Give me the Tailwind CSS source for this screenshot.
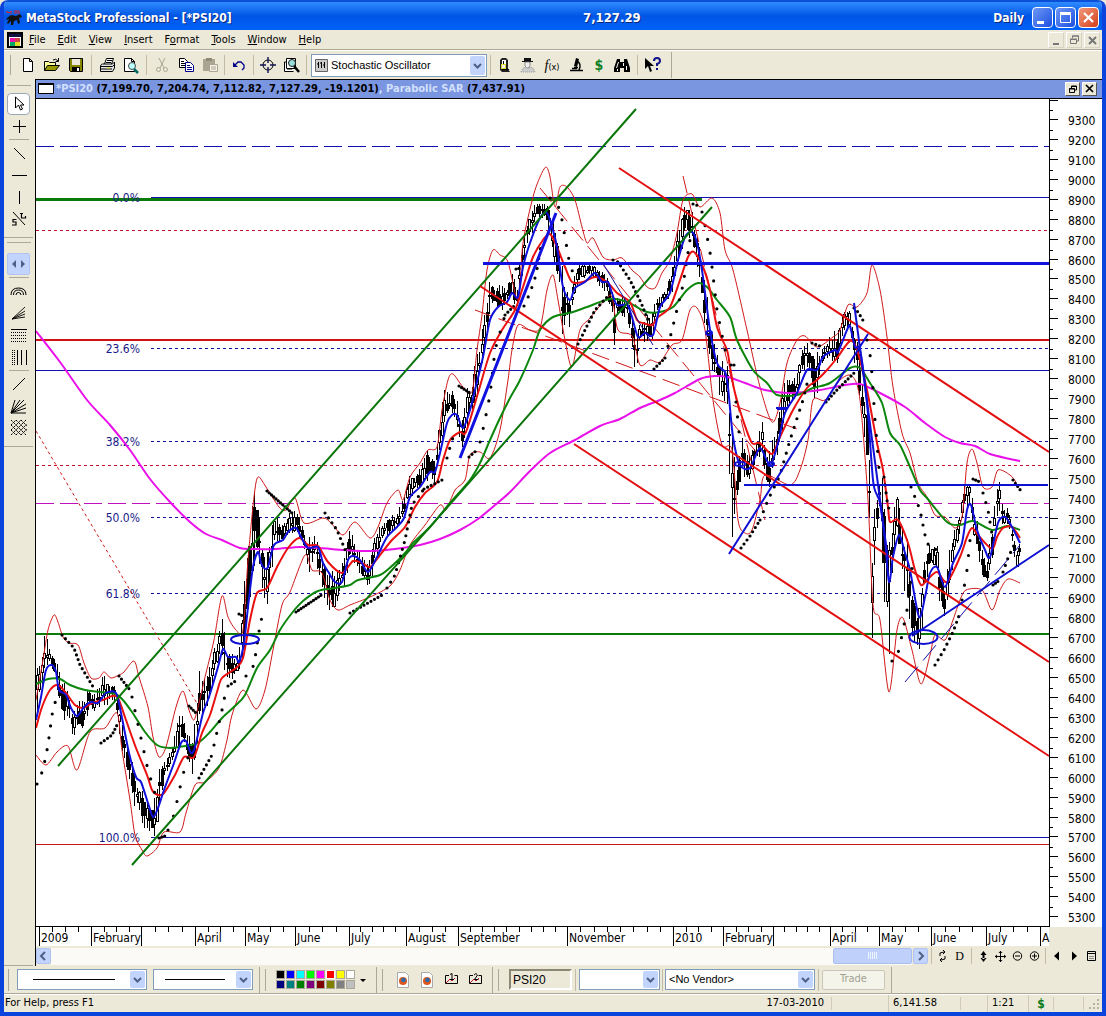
<!DOCTYPE html>
<html lang="en">
<head>
  <meta charset="UTF-8" />
  <meta name="viewport" content="width=device-width, initial-scale=1.0" />
  <title>MetaStock Professional - [*PSI20]</title>
  <script src="https://cdn.jsdelivr.net/npm/@tailwindcss/browser@4"></script>
</head>
<body class="h-screen flex flex-col overflow-hidden rounded-t-lg bg-[#ece9d8] text-[11px] text-black border-x-4 border-b-4 border-[#0a44dc] [font-family:'DejaVu_Sans_Condensed','DejaVu_Sans',sans-serif]">

  <!-- title bar -->
  <header class="-mx-1 h-[30px] shrink-0 flex items-center pl-[6px] pr-[7px] text-white font-bold text-[12px] bg-linear-to-b from-[#2f8bff] via-[#0055e5] to-[#0062fa] border-t-2 border-[#0a4fd6]">
    <svg class="size-4 mr-1 mt-1" viewBox="0 0 16 16"><path d="M1 3v-2l2 2 2-2v3M8 1h5M8 3h4M13 1v3" stroke="#e02020" fill="none"/><path d="M1 8l4-3 5 1 4-2 2 3-3 1 1 5-2 1-1-4-3 1-1 4-2 0 0-4-3 3-1-1 2-4-3 1z" fill="#111"/></svg>
    <h1 class="w-[557px] mt-1 [text-shadow:1px_1px_#0a2a80]">MetaStock Professional - [*PSI20]</h1>
    <span class="mt-1 text-[13px] [text-shadow:1px_1px_#0a2a80]">7,127.29</span>
    <span class="ml-auto mt-1 [text-shadow:1px_1px_#0a2a80]">Daily</span>
    <div class="ml-2 mt-[3px] flex gap-[2px]">
      <button aria-label="Minimize" class="size-[21px] rounded border border-white bg-linear-to-br from-[#6f97f5] to-[#1c4de0]"><svg viewBox="0 0 19 19"><path d="M4 13h7v3h-7z" fill="#fff"/></svg></button>
      <button aria-label="Maximize" class="size-[21px] rounded border border-white bg-linear-to-br from-[#6f97f5] to-[#1c4de0]"><svg viewBox="0 0 19 19"><path d="M4.500 5.500h10v9h-10zM4 4.500h11M4 6.500h11" fill="none" stroke="#fff"/></svg></button>
      <button aria-label="Close" class="size-[21px] rounded border border-white bg-linear-to-br from-[#f0987c] to-[#d23a12]"><svg viewBox="0 0 19 19"><path d="M5 5l9 9M14 5l-9 9" stroke="#fff" stroke-width="2.200"/></svg></button>
    </div>
  </header>

  <!-- menu -->
  <nav class="h-5 shrink-0 flex items-center pl-[3px] pr-[2px] pt-px border-b border-[#aca899]">
    <svg class="w-4 h-4" viewBox="0 0 16 16"><path d="M1 1h14v14h-14z" fill="#fff" stroke="#000" stroke-width="2"/><path d="M2 2h12v3h-12z" fill="#114"/><path d="M3 6h5v4h-5z" fill="#e1a"/><path d="M8 6h5v4h-5z" fill="#c44"/><path d="M3 10h5v4h-5z" fill="#0a6"/><path d="M8 10h5v4h-5z" fill="#dd2"/></svg>
    <button class="px-[6px]"><u>F</u>ile</button>
    <button class="px-[6px]"><u>E</u>dit</button>
    <button class="px-[6px]"><u>V</u>iew</button>
    <button class="px-[6px]"><u>I</u>nsert</button>
    <button class="px-[6px]">F<u>o</u>rmat</button>
    <button class="px-[6px]"><u>T</u>ools</button>
    <button class="px-[6px]"><u>W</u>indow</button>
    <button class="px-[6px]"><u>H</u>elp</button>
    <div class="ml-auto flex gap-[2px]">
      <button aria-label="Minimize chart" class="size-4 border border-white border-r-[#d8d4c4] border-b-[#d8d4c4]"><svg viewBox="0 0 14 14"><path d="M4 10h6v2h-6z" fill="#777"/></svg></button>
      <button aria-label="Restore chart" class="size-4 border border-white border-r-[#d8d4c4] border-b-[#d8d4c4]"><svg viewBox="0 0 14 14"><path d="M3.500 6.500h6v4h-6zM3 6h7M5.500 5v-2h6v5h-2M5 3h7" fill="none" stroke="#777"/></svg></button>
      <button aria-label="Close chart" class="size-4 border border-white border-r-[#d8d4c4] border-b-[#d8d4c4]"><svg viewBox="0 0 14 14"><path d="M4 4l7 7M11 4l-7 7" stroke="#777" stroke-width="2"/></svg></button>
    </div>
  </nav>

  <!-- main toolbar -->
  <div class="h-[29px] shrink-0 flex items-center border-t border-white">
    <i class="w-[3px] h-5 ml-1 mr-[5px] border-r border-[#aca899]"></i>
    <button aria-label="New" class="w-6 h-6 grid place-items-center"><svg width="16" height="16"><path d="M3.500 1.500h6l3 3v10h-9zM9.500 1.500v3h3" fill="#fff" stroke="#000"/></svg></button>
    <button aria-label="Open" class="w-6 h-6 grid place-items-center"><svg width="18" height="16"><path d="M1.500 13.500v-9h4l1 1h6v3" fill="#ff9" stroke="#000"/><path d="M1.500 13.500l3-5h12l-4 5z" fill="#990" stroke="#000"/><path d="M10 3q3-2 5 1M15.500 1v3.500h-3" fill="none" stroke="#000"/></svg></button>
    <button aria-label="Save" class="w-6 h-6 grid place-items-center"><svg width="16" height="16"><path d="M1.500 1.500h13v13h-12l-1-1z" fill="#880" stroke="#000"/><path d="M4 2h8v6h-8z" fill="#ece9d8"/><path d="M4 10h8v5h-8z" fill="#000"/><path d="M9 11h2v3h-2z" fill="#fff"/></svg></button>
    <i class="w-px h-5 mx-[3px] bg-[#c0bca8]"></i>
    <button aria-label="Print" class="w-6 h-6 grid place-items-center"><svg width="17" height="16"><path d="M5.500 7l2-5.500h7l-2 5.500" fill="#fff" stroke="#000"/><path d="M8 3.500h5M7 5.500h5" stroke="#000"/><path d="M1.500 8.500l2-1.500h10l2-2v6l-2 3.500h-12z" fill="#e6e6e6" stroke="#000"/><path d="M1.500 9.500h12l2-2M2 12h11" fill="none" stroke="#000"/><path d="M8 11h3" stroke="#dd0" stroke-width="1"/></svg></button>
    <button aria-label="Print preview" class="w-6 h-6 grid place-items-center"><svg width="18" height="17"><path d="M2.500 1.500h7l3 3v10h-10zM9.500 1.500v3h3" fill="#fff" stroke="#000"/><circle cx="10" cy="9" r="3.500" fill="#bff" stroke="#444"/><path d="M12 12l4 4" stroke="#066" stroke-width="2.500"/></svg></button>
    <i class="w-px h-5 mx-[3px] bg-[#c0bca8]"></i>
    <button aria-label="Cut" disabled class="w-6 h-6 grid place-items-center"><svg width="16" height="16" fill="none" stroke="#a9a592"><path d="M5 1l5 10M11 1l-5 10"/><circle cx="4.500" cy="12.500" r="2"/><circle cx="11.500" cy="12.500" r="2"/></svg></button>
    <button aria-label="Copy" class="w-6 h-6 grid place-items-center"><svg width="17" height="16" fill="#fff"><path d="M1.500 1.500h5l3 3v6h-8z" stroke="#000"/><path d="M3 4.500h3M3 6.500h5M3 8.500h5" stroke="#000"/><path d="M7.500 5.500h5l3 3v6h-8z" stroke="#008"/><path d="M9 8.500h3M9 10.500h5M9 12.500h5" stroke="#008"/></svg></button>
    <button aria-label="Paste" disabled class="w-6 h-6 grid place-items-center"><svg width="17" height="16"><path d="M1 2h12v12h-12z" fill="#a9a592"/><path d="M4 1h6v3h-6z" fill="#8f8b78"/><path d="M7.500 7.500h8v7h-8z" fill="#f4f2e8" stroke="#a9a592"/><path d="M9 10h5M9 12h5" stroke="#a9a592"/></svg></button>
    <i class="w-px h-5 mx-[2px] bg-[#c0bca8]"></i>
    <button aria-label="Undo" class="w-6 h-6 grid place-items-center"><svg width="14" height="14"><path d="M1 4v5h5z" fill="#008"/><path d="M3 7l3-3h3l3 3v3l-2 2" fill="none" stroke="#008" stroke-width="1.300"/></svg></button>
    <i class="w-px h-5 mx-[2px] bg-[#c0bca8]"></i>
    <button aria-label="Crosshair" class="w-6 h-6 grid place-items-center"><svg width="16" height="16" fill="none" stroke="#000"><circle cx="8" cy="8" r="5"/><path d="M8 0v6M8 10v6M0 8h6M10 8h6" stroke="#115" stroke-width="1.400"/></svg></button>
    <button aria-label="Zoom" class="w-6 h-6 grid place-items-center"><svg width="18" height="17"><path d="M1.500 5v9.500h9M1.500 5h2M4 12h5" fill="#fff" stroke="#000"/><path d="M3.500 1.500h9v10h-9z" fill="#fff" stroke="#000"/><circle cx="9" cy="6" r="3.500" fill="#9dd" stroke="#222"/><path d="M11 9l5 6" stroke="#000" stroke-width="2.500"/></svg></button>
    <i class="w-px h-5 mx-[2px] bg-[#c0bca8]"></i>
    <div class="relative w-[176px] ml-[2px]">
      <svg class="absolute left-1 top-[5px] size-[13px]" viewBox="0 0 13 13"><path d="M.500.500h12v12h-12z" fill="#ccc" stroke="#666"/><path d="M3.500 3v6M6.500 3v6M9.500 3v6M2 5h2M5 4h2M8 6h2" stroke="#000"/></svg>
      <select aria-label="Indicator" class="block w-full h-[23px] pl-[19px] appearance-none bg-white border border-[#7f9db9] text-[11px] [font-family:'Liberation_Sans',sans-serif]"><option>Stochastic Oscillator</option></select>
      <svg class="absolute right-[2px] top-[2px] w-[15px] h-[19px] rounded-xs bg-[#c2d3fc] pointer-events-none" viewBox="0 0 15 19"><path d="M4 8l3.500 3.500 3.500-3.500" fill="none" stroke="#4d6185" stroke-width="2"/></svg>
    </div>
    <i class="w-px h-5 ml-[3px] mr-px bg-[#c0bca8]"></i>
    <button aria-label="Expert" class="w-6 h-6 grid place-items-center"><svg width="14" height="16"><path d="M3 3l2-2h4l2 2v9l2 3h-8l-2-2z" fill="#222"/><path d="M5 3h4v4h-4z" fill="#fff"/><path d="M4 7h5v5h-5z" fill="#dd3"/><path d="M5 8h3v3h-3z" fill="#eee"/><path d="M6.500 4v3M5 12.500h7" stroke="#000"/></svg></button>
    <button aria-label="Explorer" class="w-6 h-6 grid place-items-center"><svg width="16" height="16"><path d="M4 1h7v3h2v1h-11v-1h2z" fill="#111"/><path d="M5 5h5v4l-2 2h-1l-2-2z" fill="#eee" stroke="#666" stroke-width=".7"/><path d="M1 15l2-4 3-1 2 2 2-2 3 1 2 4z" fill="#ccc" stroke="#999" stroke-dasharray="1 1"/></svg></button>
    <button aria-label="Indicator builder" class="w-6 h-6 grid place-items-center whitespace-nowrap"><span><em class="text-[14px] [font-family:'Liberation_Serif',serif]">f</em><span class="text-[9px]">(x)</span></span></button>
    <button aria-label="System tester" class="w-6 h-6 grid place-items-center"><svg width="16" height="16"><path d="M8 1l3 1-2 8-3-1z" fill="#000"/><path d="M6 10.500h4M9 4q5 3 2 9M2 13.500h13M4 11.500h5" stroke="#000" fill="none" stroke-width="1.500"/></svg></button>
    <button aria-label="OptionScope" class="w-[22px] h-6 text-[14px] font-bold text-[#0a8020]">$</button>
    <button aria-label="Find" class="w-6 h-6 grid place-items-center"><svg width="16" height="15"><path d="M3 1h3v3h4v-3h3l3 9v4h-6v-4h-4v4h-6v-4z" fill="#000"/><path d="M4.500 4l-2 6M9.500 5v3M12.500 8v4M3.500 11v2" stroke="#fff"/></svg></button>
    <i class="w-px h-5 mx-[3px] bg-[#c0bca8]"></i>
    <button aria-label="Context help" class="w-6 h-6 grid place-items-center"><svg width="18" height="16"><path d="M1 1v11l3-3 2 6 2-1-2-5h4z" fill="#000"/><path d="M10 4q0-3 3-3t3 3q0 2-3 3v2M13 11v2" fill="none" stroke="#118" stroke-width="2"/></svg></button>
    <i class="w-px h-[26px] ml-[6px] bg-[#aca899]"></i>
  </div>

  <div class="flex-1 min-h-0 flex">
    <!-- drawing tools -->
    <aside class="w-[31px] shrink-0 flex flex-col items-center pr-[2px]">
      <i class="w-6 h-[3px] my-[4px] border-b border-[#aca899] shrink-0"></i>
      <button aria-label="Pointer" class="w-[23px] h-[22px] mt-[3px] grid place-items-center rounded border border-[#9aa8b8] bg-white"><svg width="12" height="16"><path d="M2.500 1v11l3-3 2 5 2-1-2-4h3.500z" fill="#fff" stroke="#000"/></svg></button>
      <button aria-label="Crosshair" class="h-[22px]"><svg width="16" height="16"><path d="M8.500 2v13M2 8.500h13" stroke="#000"/></svg></button>
      <i class="w-5 h-px my-[2px] bg-[#aca899] shrink-0"></i>
      <button aria-label="Trendline" class="h-[22px]"><svg width="16" height="16"><path d="M3 3l11 11" stroke="#000"/></svg></button>
      <button aria-label="Horizontal line" class="h-[22px]"><svg width="16" height="16"><path d="M1 8.500h15" stroke="#000"/></svg></button>
      <button aria-label="Vertical line" class="h-[22px]"><svg width="16" height="16"><path d="M8.500 2v13" stroke="#000"/></svg></button>
      <button aria-label="Support and resistance" class="h-[22px]"><svg width="16" height="16" fill="none" stroke="#000"><path d="M2 1l12 13"/><path d="M5.500 8.500h-3.500v2.500h3v3h-4M10.500 2v5h4v-2M9 2.500h3" stroke-width="1.200"/></svg></button>
      <i class="w-full h-px mt-[7px] bg-[#aca899] shrink-0"></i>
      <i class="w-6 h-[3px] my-[2px] border-b border-[#aca899] shrink-0"></i>
      <button aria-label="Scroll" class="w-[23px] h-[22px] mt-[8px] grid place-items-center rounded-xs bg-[#c2d3fc] border border-[#b0c4f4]"><svg width="17" height="12"><path d="M6 2l-4 4 4 4zM11 2l4 4-4 4z" fill="#4d6185"/></svg></button>
      <i class="w-5 h-px my-[2px] bg-[#aca899] shrink-0"></i>
      <button aria-label="Fibonacci arcs" class="h-[22px]"><svg width="17" height="16" fill="none" stroke="#000"><path d="M1 12q0-7 7.500-7t7.500 7M3.500 12q0-5 5-5t5 5M6 12q0-2.500 2.500-2.500t2.500 2.500"/></svg></button>
      <button aria-label="Fibonacci fan" class="h-[22px]"><svg width="16" height="16" fill="none" stroke="#000"><path d="M1 14l13-12M1 14l13-8M1 14l13-5M1 14l13-2" stroke-width=".9"/></svg></button>
      <button aria-label="Fibonacci retracement" class="h-[22px]"><svg width="16" height="16" stroke="#000"><path d="M0 2.500h16"/><path d="M0 5.500h16M0 8.500h16M0 11.500h16M0 14.500h16" stroke-dasharray="1 1"/></svg></button>
      <button aria-label="Fibonacci time zones" class="h-[22px]"><svg width="16" height="16" stroke="#000"><path d="M1.500 1v15M3.500 1v15" stroke-dasharray="1 1"/><path d="M6.500 1v15M10.500 1v15M15.500 1v15"/></svg></button>
      <i class="w-5 h-px my-[2px] bg-[#aca899] shrink-0"></i>
      <button aria-label="Gann line" class="h-[22px]"><svg width="16" height="16"><path d="M2 14l12-12" stroke="#000"/></svg></button>
      <button aria-label="Gann fan" class="h-[22px]"><svg width="17" height="17" fill="none" stroke="#000"><path d="M1 15l13-13M1 15l9-13M1 15l4-13M1 15l15-9M1 15l15-5M1 15h15"/></svg></button>
      <button aria-label="Gann grid" class="h-[22px]"><svg width="16" height="16" fill="none" stroke="#000" stroke-dasharray="1.500 .7"><path d="M0 5l5-5M0 10l10-10M0 15l15-15M5 15l11-11M10 15l6-6M0 0l15 15M5 0l11 11M10 0l6 6M0 5l10 10M0 10l5 5"/></svg></button>
      <i class="w-full h-px mt-[7px] bg-[#aca899] shrink-0"></i>
      <i class="w-full h-px mt-auto bg-[#aca899] shrink-0"></i>
    </aside>

    <!-- chart window -->
    <main class="flex-1 min-w-0 flex flex-col border-l border-black">
      <div class="h-5 shrink-0 flex items-center pl-[2px] pr-[5px] bg-[#7b96e0] border-y border-black font-bold text-[11px]">
        <svg width="16" height="12" class="mr-[2px]"><path d="M.500.500h15v10h-15z" fill="#fff" stroke="#000"/><path d="M0 1h16" stroke="#000" stroke-width="2"/></svg>
        <p class="whitespace-pre"><span class="text-[#d3e0fb]">*PSI20 </span>(7,199.70, 7,204.74, 7,112.82, 7,127.29, -19.1201)<span class="text-[#d3e0fb]">, Parabolic SAR </span>(7,437.91)</p>
        <button aria-label="Restore" class="ml-auto w-[15px] h-[14px] bg-[#ece9d8] border border-white border-r-[#555] border-b-[#555]"><svg viewBox="0 0 13 12"><path d="M3.500 5.500h5v4h-5zM3 6h6M5.500 5v-2h5v4h-2M5 3.500h6" fill="none" stroke="#000"/></svg></button>
        <button aria-label="Close" class="ml-[2px] w-[15px] h-[14px] bg-[#ece9d8] border border-white border-r-[#555] border-b-[#555]"><svg viewBox="0 0 13 12"><path d="M3 2l7 7M10 2l-7 7" stroke="#000" stroke-width="1.700"/></svg></button>
      </div>

      <svg id="chart" class="flex-1 min-h-0 w-full block" viewBox="36 99 1066 847" preserveAspectRatio="none" role="img" aria-label="PSI20 daily chart" fill="none" stroke-linejoin="round">
        <path d="M36 99h1066v828h-53v19h-1013z" fill="#fff"/>
        <!-- horizontal levels -->
        <g shape-rendering="crispEdges">
          <path d="M36 146.500h1013" stroke="#1010b0" stroke-dasharray="18 6"/>
          <path d="M36 230.500h1013M36 465.500h1013" stroke="#c8102a" stroke-dasharray="3 3"/>
          <path d="M36 503.500h1013" stroke="#c010c0" stroke-dasharray="18 6"/>
          <path d="M151 348.500h898M151 441.500h898M151 517.500h898M151 593.500h898" stroke="#1010a0" stroke-dasharray="3 3"/>
          <path d="M151 197.500h898M36 370.500h1013M151 837.500h898" stroke="#1010b0"/>
          <path d="M36 844.500h1013" stroke="#c81414"/>
          <path d="M36 340h1013" stroke="#d41414" stroke-width="2"/>
          <path d="M36 634h1013" stroke="#0a7a0a" stroke-width="2"/>
          <path d="M36 199.500h666" stroke="#0a7a0a" stroke-width="3"/>
        </g>
        <g fill="#1a1a88" font-size="12" text-anchor="end">
          <text x="140" y="202">0.0%</text><text x="140" y="353">23.6%</text><text x="140" y="446">38.2%</text>
          <text x="140" y="522">50.0%</text><text x="140" y="598">61.8%</text><text x="140" y="842">100.0%</text>
        </g>

        <path id="wicks" stroke="#000" shape-rendering="crispEdges"/>
        <path id="hollow" stroke="#000" fill="#fff" shape-rendering="crispEdges"/>
        <path id="solid" fill="#000" shape-rendering="crispEdges"/>

        <!-- bands -->
        <g stroke="#d01818" stroke-width="1">
          <path data-curve="36,700 43,660 48,630 54,615 58,622 63,637 69,643 78,645 84,663 91,678 99,678 104,672 111,678 119,675 124,672 134,661 139,677 148,707 153,737 159,757 166,747 176,707 183,691 189,710 194,720 199,703 206,673 214,640 222,596 228,617 236,630 243,630 248,560 254,497 258,477 266,487 279,507 286,510 295,498 304,523 323,518 331,523 343,535 355,522 370,538 378,527 387,503 398,490 403,500 410,477 420,463 428,450 437,447 442,410 448,380 453,374 463,387 472,392 477,350 482,315 487,270 493,250 500,255 508,262 518,300 523,243 533,197 540,177 546,167 550,177 555,207 560,187 567,187 575,200 582,227 587,243 593,238 603,257 613,260 622,258 632,270 640,277 647,287 655,288 662,273 670,260 677,233 683,200 692,194 700,207 712,198 720,213 725,250 733,270 747,330 760,387 772,422 780,403 787,363 797,340 805,336 817,347 833,337 840,330 848,305 857,307 867,293 872,265 880,290 887,337 893,387 902,433 910,453 918,483 927,497 935,515 945,517 955,528 962,517 967,463 972,449 977,463 983,487 992,487 998,470 1010,475 1016,482"/>
          <path data-curve="36,755 46,765 57,752 68,746 77,770 90,732 105,728 117,713 122,750 130,800 135,835 142,850 147,856 157,848 164,832 180,832 186,813 195,785 205,782 219,768 227,740 232,715 243,690 256,709 265,690 273,650 282,605 290,592 305,555 312,570 322,573 330,600 338,610 350,605 370,597 390,586 400,570 410,545 425,525 440,505 446,510 455,490 465,480 470,455 480,452 490,458 500,430 508,380 512,350 518,325 530,330 540,328 547,290 553,275 558,300 565,340 572,367 580,330 590,318 605,300 612,297 618,330 632,336 640,365 650,360 660,362 672,345 682,340 690,310 697,308 705,330 713,400 722,445 732,450 738,520 745,533 752,530 760,500 765,475 790,485 800,470 808,440 813,400 825,400 840,380 852,376 860,400 868,500 873,605 880,620 889,692 897,630 903,618 912,650 921,684 930,655 935,635 945,640 953,620 960,600 966,590 982,590 992,610 1000,590 1008,579 1020,583"/>
          <path d="M36 431L198 705" stroke-dasharray="3 3"/>
          <path d="M475 310L797 429M540 188L762 459M683 176L765 520" stroke-dasharray="18 7"/>
        </g>

        <!-- moving averages -->
        <g stroke-width="2">
          <path stroke="#ea10ea" data-curve="36,331 60,362 87,400 110,425 130,450 150,479 170,502 190,522 206,534 222,540 240,548 255,549 275,549 300,547 320,548 345,550 370,551 395,549 420,545 440,539 460,530 478,519 495,505 510,492 530,471 550,453 575,440 600,426 620,419 640,408 660,400 675,393 700,379 715,376 728,377 745,383 765,390 790,393 820,390 845,385 860,384 880,393 905,407 925,423 945,437 960,443 975,446 990,454 1010,459 1020,461"/>
          <path stroke="#0c860c" data-curve="36,684 48,679 60,679 70,685 85,690 100,692 115,694 122,699 132,712 145,732 157,745 170,748 185,746 198,743 210,732 222,718 235,706 245,695 257,668 270,650 280,630 292,613 303,601 318,591 335,588 350,585 358,580 380,575 393,565 405,553 413,543 430,527 450,503 470,480 480,463 490,440 500,418 510,398 520,380 533,350 540,330 553,317 573,312 587,307 610,299 627,302 647,312 660,312 673,307 687,290 698,283 707,287 717,300 730,317 737,340 753,370 767,383 777,395 797,395 813,388 830,383 850,368 860,368 870,383 882,403 890,433 900,445 910,467 920,490 927,498 947,522 960,525 973,521 992,530 1007,526 1020,530"/>
          <path stroke="#ea1010" data-curve="36,728 42,707 50,690 58,685 66,693 75,705 83,708 92,703 103,700 112,696 118,698 126,720 136,748 147,775 152,790 158,795 164,793 175,775 184,757 194,757 202,733 210,715 217,692 222,678 236,668 243,658 250,620 257,593 267,588 277,567 288,548 299,538 308,545 318,546 328,562 342,573 353,561 362,563 370,567 380,555 392,540 405,527 415,507 425,493 437,482 443,460 450,440 460,432 466,432 478,393 490,353 502,330 515,310 523,287 533,257 543,240 550,234 557,247 565,267 572,282 583,282 595,277 607,282 617,293 630,302 637,320 643,323 652,325 658,317 670,307 680,280 688,257 694,252 703,267 710,290 717,327 727,350 730,367 735,393 743,420 752,443 760,443 772,454 780,437 793,410 807,388 817,380 827,370 837,358 850,341 857,350 867,390 877,443 883,470 888,507 890,522 898,520 908,543 915,570 921,585 927,580 937,572 947,582 960,557 967,537 972,528 978,535 992,549 997,537 1003,528 1012,527 1020,538"/>
          <path stroke="#1010dc" data-curve="36,720 41,697 46,670 52,665 56,672 59,690 66,695 71,708 77,716 84,707 91,702 98,703 106,693 116,693 121,713 129,753 136,777 141,782 148,803 153,817 158,808 164,790 174,763 181,743 186,741 191,753 195,747 203,713 209,697 218,667 223,649 228,657 236,657 239,662 244,643 248,607 253,567 258,552 261,563 264,568 268,567 274,545 283,540 288,532 296,528 301,537 308,548 318,547 323,563 329,573 335,582 342,582 348,560 353,556 360,560 368,572 377,557 387,537 397,527 404,518 410,497 420,487 430,472 435,472 440,453 447,423 452,415 457,415 463,428 470,410 475,390 483,357 490,320 498,307 507,302 512,293 518,297 523,267 530,243 540,218 547,213 552,227 557,247 563,287 570,300 575,288 585,282 595,273 602,282 608,282 612,293 617,305 627,305 632,317 638,337 645,333 653,335 660,307 670,293 678,260 685,237 692,232 697,243 702,270 710,330 717,363 725,372 728,387 733,437 740,465 750,468 760,448 770,465 778,443 785,413 797,393 807,370 817,370 823,357 835,350 838,352 847,330 850,326 855,347 860,350 867,403 873,480 877,495 880,503 885,540 889,582 893,557 899,535 905,553 910,570 919,617 925,597 930,573 937,567 945,587 953,563 962,543 967,510 971,505 977,530 985,550 990,557 998,523 1005,517 1012,527 1020,543"/>
        </g>

        <!-- parabolic SAR -->
        <g id="sar" stroke="#000" stroke-width="3.200" stroke-linecap="round"></g>

        <!-- trendlines and marks -->
        <path d="M58 766L636 109M132 865L712 207" stroke="#0a760a" stroke-width="2"/>
        <path d="M619 168L1049 452M480 286L1049 662M574 444L1049 756" stroke="#e41010" stroke-width="2"/>
        <path d="M483 263.500H1049M460 458L556 213" stroke="#1010e0" stroke-width="3"/>
        <path d="M744 485H1048M729 554L868 334M912 636L1049 545M854 303L888 560M777 409h10M776 408h12" stroke="#1010d4" stroke-width="2"/>
        <path d="M602 262L653 345" stroke="#1010a0"/>
        <path d="M905 682L1020 545" stroke="#1010a0" stroke-dasharray="20 8"/>
        <g stroke="#1010d4" stroke-width="2">
          <ellipse cx="245" cy="639.500" rx="14" ry="4.500"/>
          <ellipse cx="923.500" cy="637" rx="14" ry="7"/>
          <ellipse cx="709" cy="333" rx="3" ry="2"/>
          <ellipse cx="740" cy="464" rx="5" ry="2"/>
          <ellipse cx="771" cy="464" rx="3" ry="2"/>
        </g>
        <path id="axes" stroke="#000" shape-rendering="crispEdges"/>
        <g id="labels" fill="#000" font-size="12"></g>
      </svg>

      <!-- scroll row -->
      <div class="h-5 shrink-0 flex items-center">
        <button aria-label="Scroll left" class="w-[15px] h-4 rounded-xs bg-[#c2d3fc] border border-[#b0c4f4]"><svg viewBox="0 0 13 14"><path d="M8 3l-4 4 4 4" fill="none" stroke="#4d6185" stroke-width="2"/></svg></button>
        <div class="flex-1 h-[17px] bg-[#fbfaf6] flex justify-end">
          <div class="w-[79px] h-4 rounded-xs bg-[#bfd0fb] border border-[#a9bff2] grid place-items-center"><svg width="9" height="7"><path d="M.500 0v7M2.500 0v7M4.500 0v7M6.500 0v7M8.500 0v7" stroke="#eef4fe"/></svg></div>
        </div>
        <button aria-label="Scroll right" class="w-[15px] h-4 ml-px rounded-xs bg-[#c2d3fc] border border-[#b0c4f4]"><svg viewBox="0 0 13 14"><path d="M5 3l4 4-4 4" fill="none" stroke="#4d6185" stroke-width="2"/></svg></button>
        <i class="w-px h-4 ml-[3px] mr-[2px] bg-[#c0bca8]"></i>
        <button aria-label="Refresh" class="w-[17px]"><svg width="17" height="16" fill="none" stroke="#000"><path d="M6 8V5l4-1M9 2l2 2-2 2M11 8v3l-4 1M8 10l-2 2 2 2"/></svg></button>
        <button aria-label="Daily" class="w-[17px] text-[12px] [font-family:'Liberation_Serif',serif]">D</button>
        <i class="w-px h-4 mx-[3px] bg-[#c0bca8]"></i>
        <button aria-label="Rescale vertical" class="w-[17px]"><svg width="17" height="16"><path d="M8.500 3l3 4h-6zM8.500 14l3-4h-6zM7.500 6h2v5h-2z"/></svg></button>
        <button aria-label="Move" class="w-[17px]"><svg width="17" height="16"><path d="M8.500 3v11M3 8.500h11" stroke="#000"/><path d="M8.500 3l2 2h-4zM8.500 14l2-2h-4zM3 8.500l2-2v4zM14 8.500l-2-2v4z" fill="#000"/></svg></button>
        <button aria-label="Zoom out" class="w-[17px]"><svg width="17" height="16" fill="none" stroke="#000"><circle cx="8.500" cy="8" r="4.200"/><path d="M6 8h5"/></svg></button>
        <button aria-label="Zoom in" class="w-[17px]"><svg width="17" height="16" fill="none" stroke="#000"><circle cx="8.500" cy="8" r="4.200"/><path d="M6 8h5M8.500 5.500v5"/></svg></button>
        <i class="w-px h-4 mx-[2px] bg-[#c0bca8]"></i>
        <button aria-label="Previous" class="w-[18px]"><svg width="17" height="16"><path d="M11 3.500v9l-5-4.500z"/></svg></button>
        <button aria-label="Next" class="w-[17px]"><svg width="17" height="16"><path d="M6 3.500v9l5-4.500z"/></svg></button>
        <button aria-label="Layout" class="w-[17px] mr-[2px]"><svg width="17" height="16" fill="none" stroke="#000"><path d="M4.500 3.500h8v9h-8zM4 5.500h9"/><path d="M6 8.500h5M6 10.500h5" stroke="#888"/></svg></button>
      </div>
    </main>
  </div>

  <!-- line style toolbar -->
  <div class="h-7 shrink-0 flex items-center border-b border-[#aca899]">
    <i class="w-[5px] h-[22px] mr-2 border-r border-[#aca899]"></i>
    <div class="relative w-[130px] mr-[6px]">
      <select aria-label="Line style" class="block w-full h-[21px] appearance-none bg-white border border-[#7f9db9]"><option></option></select>
      <i class="absolute left-4 right-8 top-[10px] h-px bg-black pointer-events-none"></i>
      <svg class="absolute right-[2px] top-[2px] w-[15px] h-[17px] rounded-xs bg-[#c2d3fc] pointer-events-none" viewBox="0 0 15 17"><path d="M4 7l3.500 3.500 3.500-3.500" fill="none" stroke="#4d6185" stroke-width="2"/></svg>
    </div>
    <div class="relative w-[100px]">
      <select aria-label="Line weight" class="block w-full h-[21px] appearance-none bg-white border border-[#7f9db9]"><option></option></select>
      <i class="absolute left-3 right-7 top-[10px] h-px bg-black pointer-events-none"></i>
      <svg class="absolute right-[2px] top-[2px] w-[15px] h-[17px] rounded-xs bg-[#c2d3fc] pointer-events-none" viewBox="0 0 15 17"><path d="M4 7l3.500 3.500 3.500-3.500" fill="none" stroke="#4d6185" stroke-width="2"/></svg>
    </div>
    <i class="w-px h-[26px] ml-[6px] bg-[#aca899]"></i>
    <i class="w-px h-[22px] ml-[5px] mr-[10px] bg-[#aca899]"></i>
    <div class="grid grid-cols-8 gap-px">
      <button aria-label="Black" class="size-[9px] border border-[#aca899] bg-[#000000]"></button>
      <button aria-label="Blue" class="size-[9px] border border-[#aca899] bg-[#0000ff]"></button>
      <button aria-label="Cyan" class="size-[9px] border border-[#aca899] bg-[#00ffff]"></button>
      <button aria-label="Lime" class="size-[9px] border border-[#aca899] bg-[#00ff00]"></button>
      <button aria-label="Magenta" class="size-[9px] border border-[#aca899] bg-[#ff00ff]"></button>
      <button aria-label="Red" class="size-[9px] border border-white bg-[#ff0000]"></button>
      <button aria-label="Yellow" class="size-[9px] border border-[#aca899] bg-[#ffff00]"></button>
      <button aria-label="White" class="size-[9px] border border-[#aca899] bg-[#ffffff]"></button>
      <button aria-label="Navy" class="size-[9px] border border-[#aca899] bg-[#000080]"></button>
      <button aria-label="Teal" class="size-[9px] border border-[#aca899] bg-[#008080]"></button>
      <button aria-label="Green" class="size-[9px] border border-[#aca899] bg-[#008000]"></button>
      <button aria-label="Purple" class="size-[9px] border border-[#aca899] bg-[#800080]"></button>
      <button aria-label="Maroon" class="size-[9px] border border-[#aca899] bg-[#800000]"></button>
      <button aria-label="Olive" class="size-[9px] border border-[#aca899] bg-[#808000]"></button>
      <button aria-label="Gray" class="size-[9px] border border-[#aca899] bg-[#808080]"></button>
      <button aria-label="Silver" class="size-[9px] border border-[#aca899] bg-[#c0c0c0]"></button>
    </div>
    <button aria-label="More colors" class="w-3"><svg width="12" height="8"><path d="M5 3h6l-3 3z"/></svg></button>
    <i class="w-px h-[26px] ml-[9px] bg-[#aca899]"></i>
    <i class="w-px h-[22px] ml-[5px] mr-[8px] bg-[#aca899]"></i>
    <button aria-label="Web page 1" class="w-6 h-6 grid place-items-center"><svg width="14" height="16"><path d="M1.500.500h8l3 3v12h-11z" fill="#fff" stroke="#aaa"/><circle cx="7" cy="9" r="4" fill="#e0561c"/><circle cx="7.500" cy="8" r="2.300" fill="#2a6cb0"/></svg></button>
    <button aria-label="Web page 2" class="w-6 h-6 grid place-items-center"><svg width="14" height="16"><path d="M1.500.500h8l3 3v12h-11z" fill="#fff" stroke="#aaa"/><circle cx="7" cy="9" r="4" fill="#e0561c"/><circle cx="7.500" cy="8" r="2.300" fill="#2a6cb0"/></svg></button>
    <button aria-label="Template 1" class="w-6 h-6 grid place-items-center"><svg width="15" height="15" fill="none"><path d="M5 3.500h-3.500v8h12v-8h-3" stroke="#000"/><path d="M2 11l4-4 2 2 3-3" stroke="#c01030"/><path d="M6 2.500l2-1v6M6 7.500h4" stroke="#000"/></svg></button>
    <button aria-label="Template 2" class="w-6 h-6 grid place-items-center"><svg width="15" height="15" fill="none"><path d="M5 3.500h-3.500v8h12v-8h-3" stroke="#000"/><path d="M2 11l4-4 2 2 3-3" stroke="#c01030"/><path d="M6 3q2-3 3.500 0l-3 4.500h4" stroke="#000"/></svg></button>
    <i class="w-px h-[26px] ml-[5px] bg-[#aca899]"></i>
    <i class="w-px h-[22px] ml-[5px] mr-[10px] bg-[#aca899]"></i>
    <input aria-label="Symbol" value="PSI20" class="w-[63px] h-[21px] px-[2px] text-[12px] leading-4 border-2 border-[#8a8775] border-r-white border-b-white bg-[#ece9d8] [font-family:'Liberation_Sans',sans-serif]">
    <i class="w-px h-[22px] mx-[3px] bg-[#c0bca8]"></i>
    <div class="relative w-[81px]">
      <select aria-label="Order" class="block w-full h-[21px] appearance-none bg-white border border-[#7f9db9]"><option></option></select>
      <svg class="absolute right-[2px] top-[2px] w-[15px] h-[17px] rounded-xs bg-[#c2d3fc] pointer-events-none" viewBox="0 0 15 17"><path d="M4 7l3.500 3.500 3.500-3.500" fill="none" stroke="#4d6185" stroke-width="2"/></svg>
    </div>
    <i class="w-px h-[22px] mx-[2px] bg-[#c0bca8]"></i>
    <div class="relative w-[150px]">
      <select aria-label="Vendor" class="block w-full h-[21px] pl-[3px] appearance-none bg-white border border-[#7f9db9] text-[11px] [font-family:'Liberation_Sans',sans-serif]"><option>&lt;No Vendor&gt;</option></select>
      <svg class="absolute right-[2px] top-[2px] w-[15px] h-[17px] rounded-xs bg-[#c2d3fc] pointer-events-none" viewBox="0 0 15 17"><path d="M4 7l3.500 3.500 3.500-3.500" fill="none" stroke="#4d6185" stroke-width="2"/></svg>
    </div>
    <i class="w-px h-[22px] mx-[3px] bg-[#c0bca8]"></i>
    <button disabled class="w-[63px] h-5 rounded-xs border border-[#c9c7ba] bg-[#f5f4ea] text-[#a1a192]">Trade</button>
    <i class="w-px h-[26px] ml-[6px] bg-[#aca899]"></i>
  </div>

  <!-- status bar -->
  <footer class="h-[18px] shrink-0 flex items-center border-t border-white text-[11px]">
    <span class="flex-1 pl-px">For Help, press F1</span>
    <span class="w-[70px] pr-[7px] text-right whitespace-nowrap">17-03-2010</span>
    <span class="w-[57px] h-[13px] border-l border-[#cfcbb8]"></span>
    <span class="w-[72px] pl-1 border-l border-[#cfcbb8]">6,141.58</span>
    <span class="w-[27px] h-[13px] border-l border-[#cfcbb8]"></span>
    <span class="w-[41px] pl-1 border-l border-[#cfcbb8]">1:21</span>
    <span class="w-[25px] text-center font-bold text-[12px] text-[#0a7a1a] border-l border-[#cfcbb8]">$</span>
    <span class="w-[31px] h-[13px] border-x border-[#cfcbb8]"></span>
    <svg width="18" height="15"><path d="M13 3h2v2h-2zM9 7h2v2h-2zM13 7h2v2h-2zM5 11h2v2h-2zM9 11h2v2h-2zM13 11h2v2h-2z" fill="#b8b4a2"/></svg>
  </footer>

  <script>
    // daily range keypoints: x, high, low
    const range = [
      [37,668,712],[41,655,690],[45,636,670],[50,648,664],[55,660,677],[60,675,708],[63,680,725],[68,690,713],[73,713,740],[78,705,726],[83,697,733],[89,690,707],
      [96,693,710],[103,677,703],[108,680,703],[114,683,700],[118,697,720],[120,710,743],[124,733,757],[128,745,777],[133,768,803],[137,783,806],[144,797,827],
      [151,807,833],[156,797,836],[159,773,805],[164,760,777],[169,753,770],[174,737,760],[181,703,740],[186,730,750],[191,740,776],[196,720,755],[199,673,720],
      [206,677,707],[211,657,693],[216,643,667],[222,613,653],[226,647,677],[233,657,677],[239,650,677],[244,590,653],[249,540,607],[253,490,587],[258,503,550],
      [263,547,607],[266,543,610],[270,540,590],[274,517,543],[283,523,543],[290,513,533],[298,513,533],[303,527,543],[308,540,573],[315,537,557],[323,557,597],
      [328,567,607],[334,577,613],[340,567,590],[345,553,583],[350,530,557],[355,547,563],[362,557,577],[368,567,593],[373,540,570],[382,523,537],[390,517,533],
      [397,512,527],[404,497,520],[408,477,497],[418,473,490],[428,447,477],[435,463,480],[442,403,440],[445,390,417],[452,390,413],[457,403,427],[462,423,450],
      [467,390,423],[472,380,410],[477,357,390],[481,340,370],[485,307,347],[490,280,307],[495,287,303],[500,282,310],[507,287,303],[512,273,297],[517,287,310],
      [522,240,273],[527,223,243],[532,207,233],[537,200,217],[545,202,217],[550,210,233],[555,227,267],[560,247,290],[562,273,340],[567,287,317],[570,293,330],
      [573,277,300],[578,267,283],[583,263,277],[593,263,277],[600,270,287],[607,277,293],[612,293,317],[614,300,357],[617,297,317],[628,300,317],[633,320,367],
      [637,333,367],[640,323,340],[647,317,340],[652,313,340],[657,297,313],[667,287,300],[673,260,290],[677,233,267],[685,203,233],[692,213,237],[698,243,273],
      [703,267,303],[707,300,347],[710,327,363],[717,357,383],[722,360,403],[728,370,400],[730,403,500],[733,453,547],[737,470,503],[742,440,470],[748,457,483],
      [755,447,463],[762,423,453],[768,460,493],[773,437,470],[778,423,450],[782,387,430],[788,380,403],[797,373,397],[803,340,370],[808,343,367],[815,353,400],
      [822,350,363],[830,337,357],[837,330,370],[843,310,330],[850,307,327],[853,330,357],[858,343,383],[863,383,430],[867,403,463],[870,447,550],[872,543,640],
      [875,497,550],[880,483,503],[883,483,583],[887,533,617],[890,520,660],[893,513,550],[898,483,537],[902,533,577],[907,543,597],[912,583,637],[917,613,643],
      [919,597,663],[922,577,630],[925,550,580],[930,547,567],[937,543,570],[940,570,603],[945,587,617],[948,560,603],[953,537,560],[960,510,533],[965,480,503],
      [970,480,507],[974,507,540],[978,527,550],[982,550,580],[987,557,583],[992,533,560],[995,497,527],[999,480,507],[1003,510,527],[1008,507,523],[1013,533,550],
      [1016,550,573],[1021,537,553]
    ];

    let wicks = '', hollow = '', solid = '', seed = 7, k = 0;
    const rnd = () => (seed = (seed * 16807) % 2147483647) / 2147483647;
    for (let x = 37; x <= 1021; x += 2.5) {
      while (k < range.length - 2 && range[k + 1][0] < x) k++;
      const [x0, h0, l0] = range[k], [x1, h1, l1] = range[k + 1];
      const t = Math.max(0, (x - x0) / (x1 - x0));
      const hi = h0 + (h1 - h0) * t, lo = l0 + (l1 - l0) * t, span = lo - hi;
      const top = Math.round(hi + span * (0.15 + rnd() * 0.4)), bottom = Math.max(top + 2, Math.round(lo - span * (0.1 + rnd() * 0.45)));
      const px = Math.floor(x);
      wicks += `M${px + 0.5} ${Math.round(hi + span * (rnd() * 0.35 - 0.1))}V${Math.round(lo - span * (rnd() * 0.35 - 0.1))}`;
      const falling = h1 > h0 ? rnd() < 0.85 : rnd() < 0.35;
      if (falling) solid += `M${px - 1} ${top}h3v${bottom - top}h-3z`;
      else hollow += `M${px - 0.5} ${top + 0.5}h2v${bottom - top}h-2z`;
    }
    document.getElementById('wicks').setAttribute('d', wicks);
    document.getElementById('hollow').setAttribute('d', hollow);
    document.getElementById('solid').setAttribute('d', solid);

    // rounded curve through the listed points
    document.querySelectorAll('[data-curve]').forEach(el => {
      const p = el.dataset.curve.split(' ').map(s => s.split(',').map(Number));
      let d = `M${p[0]}`;
      for (let i = 0; i < p.length - 1; i++) {
        const a = p[i - 1] || p[i], b = p[i], c = p[i + 1], e = p[i + 2] || c;
        d += `C${b[0] + (c[0] - a[0]) / 7} ${b[1] + (c[1] - a[1]) / 7} ${c[0] - (e[0] - b[0]) / 7} ${c[1] - (e[1] - b[1]) / 7} ${c}`;
      }
      el.setAttribute('d', d);
    });

    // SAR runs: path and dot spacing
    const sar = [
      ['62,635 74,648 80,665 95,690', 5], ['37,784 43,770 48,745 52,715 57,695', 12], ['101,743 112,735 117,725', 4],
      ['119,676 130,690', 4], ['132,697 137,720 148,770 156,797', 14], ['159,838 165,836', 3], ['168,830 174,815 181,783 186,763 190,752', 15], ['189,706 197,714', 3],
      ['199,778 212,755', 5], ['214,745 222,710 226,690', 12], ['228,686 237,680', 4], ['239,614 243,616', 3], ['246,676 254,665 260,625 263,613', 12],
      ['267,491 292,513', 3], ['296,612 323,594', 3], ['325,513 337,530 346,552', 6], ['350,613 384,594', 4],
      ['387,588 395,575 405,540 412,505 424,489', 7], ['424,489 442,480', 4], ['447,458 452,440 457,430', 10], ['459,386 470,393', 3],
      ['469,457 477,450', 4], ['480,442 484,425 490,395 495,350 505,315', 14], ['505,315 515,305', 4], ['524,306 530,293 536,275 541,245', 10],
      ['516,269 521,268', 3], ['550,198 558,205 562,220 569,260 575,280', 13], ['578,344 595,310 608,296', 5],
      ['613,260 618,262 630,280 642,305 648,320', 5], ['654,369 665,358', 4], ['665,358 672,330 683,285 690,240', 12],
      ['693,204 699,206', 4], ['702,212 705,225 711,258 717,310 722,335 726,354', 14], ['731,365 736,365', 3], ['736,402 739,432', 15],
      ['741,548 750,536 760,520', 5], ['760,520 768,500 780,475 790,440 803,400 808,380', 9], ['812,343 820,346', 4], ['826,402 835,392 855,372', 4],
      ['854,308 858,312 864,322', 5], ['867,340 871,360 875,420 880,480', 16], ['884,477 888,508 892,508', 8], ['892,661 896,661 900,645 907,610 913,560', 14],
      ['911,487 920,510 926,540 930,548 938,550', 10], ['935,665 944,650 953,632 960,613', 6], ['962,600 967,570 970,540', 15],
      ['973,479 980,482', 3], ['983,493 988,510 993,540', 10], ['993,585 1000,580', 3], ['1003,572 1008,558 1015,543', 7], ['1013,480 1021,491', 4]
    ];
    document.getElementById('sar').innerHTML = sar.map(([p, gap]) => `<polyline points="${p}" stroke-dasharray="0 ${gap}"/>`).join('');

    // axes
    let axes = 'M1049.5 99V927M36 926.5H1050', labels = '';
    for (let i = 0; i <= 40; i++) {
      const y = 120 + Math.round(i * 19.93);
      axes += `M1050 ${y - 0.5}h8M1050 ${y - 9.5}h3`;
      labels += `<text x="1068" y="${y + 5}">${9300 - i * 100}</text>`;
    }
    axes += 'M1050 100.5h8';
    const months = [[39,'2009'],[91,'February'],[141,''],[195,'April'],[245,'May'],[295,'June'],[349,'July'],[406,'August'],[458,'September'],[567,'November'],[673,'2010'],[723,'February'],[773,''],[830,'April'],[879,'May'],[931,'June'],[986,'July'],[1040,'A']];
    months.forEach(([x, name], i) => {
      axes += `M${x + 0.5} 927v19`;
      labels += `<text x="${x + 2}" y="942">${name}</text>`;
      const end = months[i + 1] ? months[i + 1][0] : x;
      const n = Math.max(1, Math.round((end - x) / 12.5));
      for (let j = 1; j < n; j++) axes += `M${Math.round(x + (end - x) * j / n) + 0.5} 927v5`;
    });
    document.getElementById('axes').setAttribute('d', axes);
    document.getElementById('labels').innerHTML = labels;
  </script>
</body>
</html>
